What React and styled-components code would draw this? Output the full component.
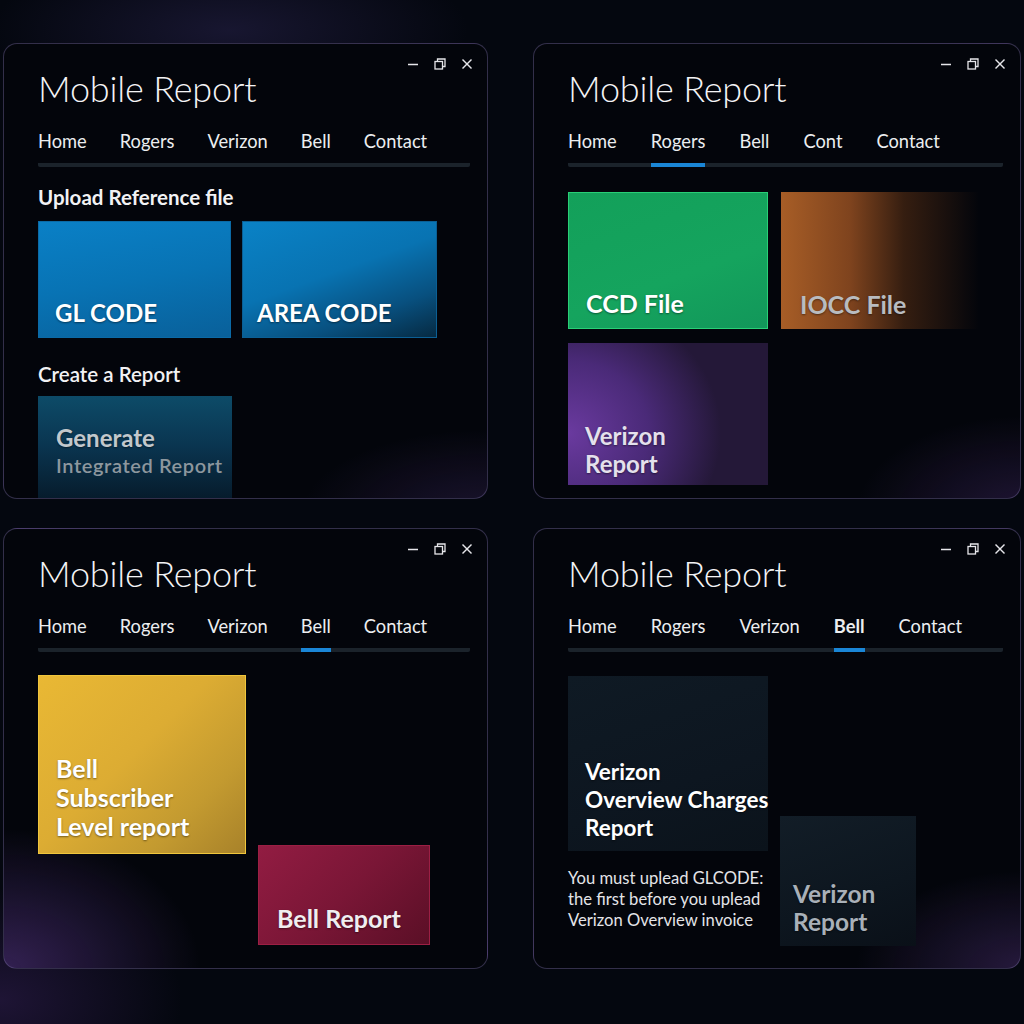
import React from "react";
import styled, { createGlobalStyle } from "styled-components";

const GlobalStyle = createGlobalStyle`
  html, body {
    margin: 0;
    padding: 0;
    background: #04070f;
  }
  * {
    box-sizing: border-box;
  }
`;

// === 레이아웃 ===
const Page = styled.div`
  width: 1024px;
  height: 1024px;
  overflow: hidden;
  display: grid;
  grid-template-columns: 485px 488px;
  grid-template-rows: 456px 441px;
  column-gap: 45px;
  row-gap: 29px;
  padding: 43px 0 0 3px;
  font-family: Lato, "Open Sans", sans-serif;
  color: #f2f2f4;
  background:
    radial-gradient(ellipse 340px 120px at 230px 30px, rgba(60, 50, 110, 0.35), transparent 70%),
    radial-gradient(ellipse 260px 160px at 0px 1000px, rgba(70, 40, 110, 0.4), transparent 70%),
    #04070f;
`;

const Window = styled.section`
  position: relative;
  border: 1px solid rgba(110, 100, 150, 0.45);
  border-radius: 14px;
  overflow: hidden;
  padding: 0 17px 0 34px;
  background: ${(p) => p.$bg};
`;

const Header = styled.div`
  display: flex;
  justify-content: space-between;
  align-items: flex-start;
`;

const Title = styled.h1`
  margin: 23px 0 0;
  font-size: 36px;
  font-weight: 300;
  line-height: 1.2;
  letter-spacing: -0.2px;
  color: #f4f4f6;
`;

const Controls = styled.div`
  display: flex;
  align-items: center;
  gap: 15px;
  margin: 14px -3px 0 0;
  color: #e6e6ea;
`;

const Nav = styled.nav`
  display: flex;
  gap: ${(p) => p.$gap || 33}px;
  margin-top: 19px;
  background: linear-gradient(#1b232b, #1b232b) left bottom / 100% 4px no-repeat;
  border-radius: 2px;
`;

const Tab = styled.div`
  padding-bottom: 10px;
  font-size: 18.3px;
  line-height: 24px;
  font-weight: ${(p) => (p.$bold ? 700 : 400)};
  color: #eceef0;
  border-bottom: 4px solid ${(p) => (p.$active ? "#1a86d6" : "transparent")};
`;

const Heading = styled.h2`
  margin: ${(p) => p.$mt}px 0 0;
  font-size: 20.5px;
  line-height: 24px;
  font-weight: ${(p) => p.$weight || 700};
  color: #f2f2f4;
`;

const TileRow = styled.div`
  display: flex;
  align-items: flex-start;
  gap: ${(p) => p.$gap || 12}px;
  margin-top: ${(p) => p.$mt || 0}px;
`;

const TileGrid = styled.div`
  display: grid;
  grid-template-columns: 200px 198px;
  column-gap: 13px;
  row-gap: 14px;
  margin-top: ${(p) => p.$mt}px;
`;

const Column = styled.div`
  display: flex;
  flex-direction: column;
  width: ${(p) => p.$w}px;
`;

const Tile = styled.div`
  width: ${(p) => p.$w}px;
  height: ${(p) => p.$h}px;
  margin-top: ${(p) => p.$mt || 0}px;
  display: flex;
  flex-direction: column;
  justify-content: ${(p) => (p.$top ? "flex-start" : "flex-end")};
  padding: ${(p) => p.$pad};
  background: ${(p) => p.$bg};
  border: ${(p) => (p.$border ? `1px solid ${p.$border}` : "none")};
  flex-shrink: 0;
`;

const TileLabel = styled.div`
  font-size: ${(p) => p.$size || 24}px;
  line-height: ${(p) => p.$lh || 28}px;
  font-weight: 700;
  color: ${(p) => p.$color || "#ffffff"};
  white-space: nowrap;
  text-shadow: 0 1px 2px rgba(0, 0, 0, 0.45);
`;

const SubLabel = styled.div`
  font-size: 20px;
  line-height: 26px;
  font-weight: 600;
  color: #8d979e;
  letter-spacing: 0.6px;
  white-space: nowrap;
`;

const Note = styled.p`
  margin: 17px 0 0;
  font-size: 16.6px;
  line-height: 21px;
  color: #e4e4e8;
  white-space: nowrap;
`;

// === 아이콘 ===
const MinIcon = () => (
  <svg width="12" height="12" viewBox="0 0 12 12">
    <line x1="1" y1="6.5" x2="11" y2="6.5" stroke="currentColor" strokeWidth="1.4" />
  </svg>
);

const RestoreIcon = () => (
  <svg width="12" height="12" viewBox="0 0 12 12" fill="none" stroke="currentColor" strokeWidth="1.3">
    <rect x="1" y="3.5" width="7.5" height="7.5" />
    <path d="M3.5 3.5V1h7.5v7.5H8.5" />
  </svg>
);

const CloseIcon = () => (
  <svg width="12" height="12" viewBox="0 0 12 12" stroke="currentColor" strokeWidth="1.4">
    <line x1="1.5" y1="1.5" x2="10.5" y2="10.5" />
    <line x1="10.5" y1="1.5" x2="1.5" y2="10.5" />
  </svg>
);

// === 컴포넌트 ===
const ReportWindow = ({ tabs, active, bold, gap, bg, children }) => (
  <Window $bg={bg}>
    <Header>
      <Title>Mobile Report</Title>
      <Controls>
        <MinIcon />
        <RestoreIcon />
        <CloseIcon />
      </Controls>
    </Header>
    <Nav $gap={gap}>
      {tabs.map((t, i) => (
        <Tab key={i} $active={i === active} $bold={bold && i === active}>
          {t}
        </Tab>
      ))}
    </Nav>
    {children}
  </Window>
);

const baseTabs = ["Home", "Rogers", "Verizon", "Bell", "Contact"];

const App = () => {
  return (
    <>
      <GlobalStyle />
      <Page>
        {/* 왼쪽 위 */}
        <ReportWindow
          tabs={baseTabs}
          active={-1}
          gap={33}
          bg="radial-gradient(ellipse 260px 120px at 480px 470px, rgba(70,45,110,0.35), transparent 70%), #03050b"
        >
          <Heading $mt={18}>Upload Reference file</Heading>
          <TileRow $gap={11} $mt={12}>
            <Tile
              $w={193}
              $h={117}
              $pad="0 16px 10px"
              $bg="linear-gradient(170deg, #0a80c6 0%, #0873b4 50%, #09609a 100%)"
              $border="#0b6aa6"
            >
              <TileLabel>GL CODE</TileLabel>
            </Tile>
            <Tile
              $w={195}
              $h={117}
              $pad="0 14px 10px"
              $bg="linear-gradient(160deg, #0a82c6 0%, #0873b2 45%, #08507f 75%, #062a42 100%)"
              $border="#0b5f94"
            >
              <TileLabel>AREA CODE</TileLabel>
            </Tile>
          </TileRow>
          <Heading $mt={24} $weight={600}>
            Create a Report
          </Heading>
          <TileRow $mt={10}>
            <Tile
              $w={194}
              $h={110}
              $top
              $pad="28px 18px 0"
              $bg="linear-gradient(180deg, #0d4b68 0%, #0a3550 45%, #061827 100%)"
            >
              <TileLabel $color="#c2c8cc">Generate</TileLabel>
              <SubLabel>Integrated Report</SubLabel>
            </Tile>
          </TileRow>
        </ReportWindow>

        {/* 오른쪽 위 */}
        <ReportWindow
          tabs={["Home", "Rogers", "Bell", "Cont", "Contact"]}
          active={1}
          gap={34}
          bg="radial-gradient(ellipse 240px 140px at 490px 470px, rgba(75,45,115,0.4), transparent 70%), #03050b"
        >
          <TileGrid $mt={25}>
            <Tile
              $w={200}
              $h={137}
              $pad="0 17px 11px"
              $bg="linear-gradient(160deg, #13a05a, #15a45e 60%, #12975a)"
              $border="#28cf76"
            >
              <TileLabel $size={25}>CCD File</TileLabel>
            </Tile>
            <Tile
              $w={198}
              $h={137}
              $pad="0 19px 11px"
              $bg="linear-gradient(90deg, rgba(176,98,40,0.95) 0%, rgba(140,74,32,0.9) 35%, rgba(70,38,18,0.75) 62%, rgba(10,8,10,0) 100%)"
            >
              <TileLabel $size={25} $color="#b9bcc0">
                IOCC File
              </TileLabel>
            </Tile>
            <Tile
              $w={200}
              $h={142}
              $pad="0 17px 7px"
              $bg="radial-gradient(ellipse 180px 160px at 0px 90px, #6a3a9f 0%, #4a2a78 45%, #241838 85%), #1a1228"
            >
              <TileLabel $color="#e4e0ec">Verizon</TileLabel>
              <TileLabel $color="#e4e0ec">Report</TileLabel>
            </Tile>
          </TileGrid>
        </ReportWindow>

        {/* 왼쪽 아래 */}
        <ReportWindow
          tabs={baseTabs}
          active={3}
          gap={33}
          bg="radial-gradient(ellipse 280px 200px at 0px 440px, rgba(90,55,140,0.55), transparent 70%), #03050b"
        >
          <TileRow $mt={23} $gap={12}>
            <Tile
              $w={208}
              $h={179}
              $pad="0 17px 12px"
              $bg="linear-gradient(135deg, #e9b834 0%, #dcac33 45%, #c39a30 75%, #a8822a 100%)"
              $border="#f0c63c"
            >
              <TileLabel $size={25} $lh={29}>
                Bell
              </TileLabel>
              <TileLabel $size={25} $lh={29}>
                Subscriber
              </TileLabel>
              <TileLabel $size={25} $lh={29}>
                Level report
              </TileLabel>
            </Tile>
            <Tile
              $w={172}
              $h={100}
              $mt={170}
              $pad="0 18px 12px"
              $bg="linear-gradient(135deg, #921c42 0%, #7a1636 50%, #5a0f26 100%)"
              $border="#9c1f44"
            >
              <TileLabel $size={25} $color="#f0eef0">
                Bell Report
              </TileLabel>
            </Tile>
          </TileRow>
        </ReportWindow>

        {/* 오른쪽 아래 */}
        <ReportWindow
          tabs={baseTabs}
          active={3}
          bold
          gap={34}
          bg="radial-gradient(ellipse 240px 140px at 490px 440px, rgba(80,50,120,0.45), transparent 70%), #03050b"
        >
          <TileRow $mt={24} $gap={12}>
            <Column $w={200}>
              <Tile
                $w={200}
                $h={175}
                $pad="0 0 9px 17px"
                $bg="linear-gradient(160deg, #0f1a24 0%, #0d1620 60%, #0b131b 100%)"
              >
                <TileLabel $size={22.5}>Verizon</TileLabel>
                <TileLabel $size={22.5}>Overview Charges</TileLabel>
                <TileLabel $size={22.5}>Report</TileLabel>
              </Tile>
              <Note>
                You must uplead GLCODE:
                <br />
                the first before you uplead
                <br />
                Verizon Overview invoice
              </Note>
            </Column>
            <Tile
              $w={136}
              $h={130}
              $mt={140}
              $pad="0 10px 10px 13px"
              $bg="linear-gradient(160deg, #121d27 0%, #0d161f 60%, #0a1018 100%)"
            >
              <TileLabel $size={24.5} $color="#a9b0b8">
                Verizon
              </TileLabel>
              <TileLabel $size={24.5} $color="#a9b0b8">
                Report
              </TileLabel>
            </Tile>
          </TileRow>
        </ReportWindow>
      </Page>
    </>
  );
};

export default App;
